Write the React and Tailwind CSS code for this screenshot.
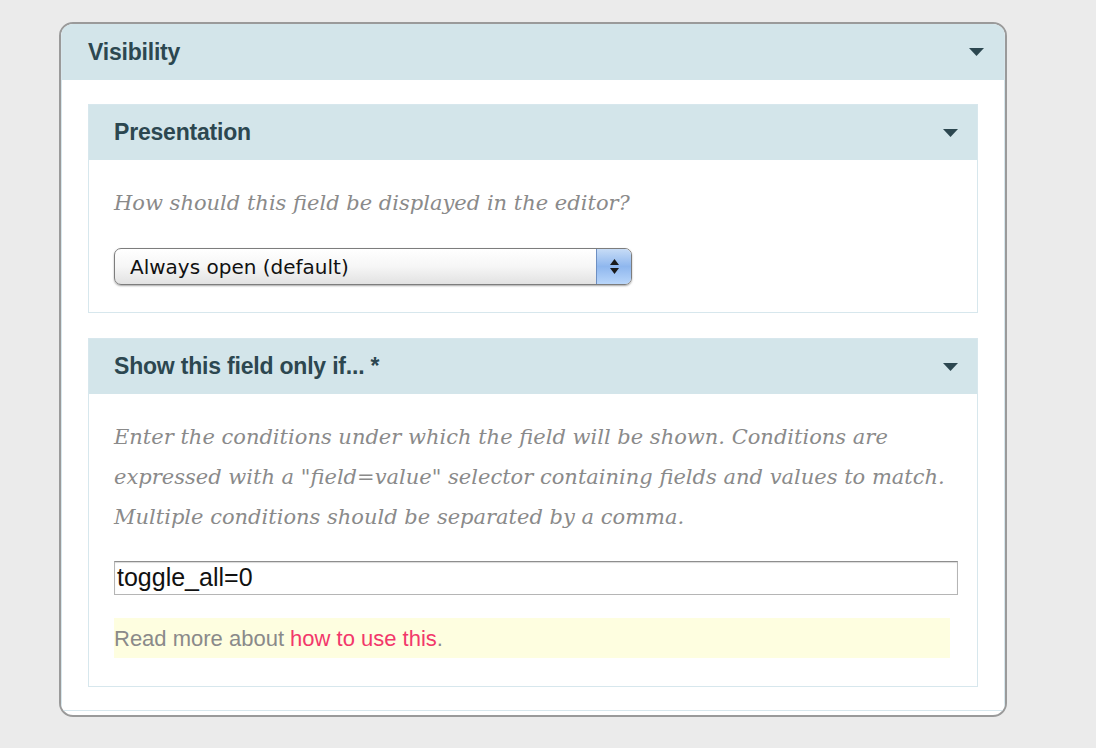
import React from "react";

function Caret({ className = "" }) {
  return (
    <svg width="15" height="8" viewBox="0 0 15 8" className={className}>
      <path d="M0 0 H15 L7.5 8 Z" fill="#2c4750" />
    </svg>
  );
}

function PanelHeader({ title }) {
  return (
    <div className="h-[55px] bg-[#d3e5ea] flex items-center justify-between pl-[25px] pr-[19px]">
      <span className="text-[23px] font-bold text-[#2c4750] tracking-[-0.2px]" style={{ fontFamily: '"Liberation Sans", Arial, sans-serif' }}>
        {title}
      </span>
      <Caret />
    </div>
  );
}

export default function App() {
  const serif = { fontFamily: '"DejaVu Serif", Georgia, serif' };
  const sans = { fontFamily: '"Liberation Sans", Arial, sans-serif' };
  return (
    <div className="w-[1096px] h-[748px] bg-[#ebebeb] pt-[22px] pl-[59px]">
      <div className="w-[948px] h-[695px] border-2 border-[#9a9a9a] rounded-[14px] bg-white overflow-hidden">
        <div className="border-x border-b border-[#d7e7ed] h-[687px] flex flex-col">
          <div className="h-[56px] bg-[#d3e5ea] flex items-center justify-between pl-[26px] pr-[20px]">
            <span className="text-[23px] font-bold text-[#2c4750] tracking-[-0.2px]" style={sans}>
              Visibility
            </span>
            <Caret />
          </div>
          <div className="pt-[24px] px-[26px] flex flex-col gap-[25px]">
            <div className="border border-[#d7e7ed] h-[209px]">
              <PanelHeader title="Presentation" />
              <div className="px-[25px] pt-[28px]">
                <p className="text-[21px] italic text-[#8a8a8a] leading-[30px] whitespace-nowrap" style={serif}>
                  How should this field be displayed in the editor?
                </p>
                <div className="mt-[30px] w-[518px] h-[37px] rounded-[7px] border border-[#7d7d7d] shadow-[0_1px_2px_rgba(0,0,0,0.35)] bg-gradient-to-b from-white via-[#f6f6f6] to-[#e2e2e2] flex items-stretch overflow-hidden">
                  <div className="flex-1 flex items-center pl-[15px] text-[20px] text-[#111]" style={{ fontFamily: '"DejaVu Sans", Verdana, sans-serif' }}>
                    Always open (default)
                  </div>
                  <div className="w-[35px] border-l border-[#6d8fc2] bg-gradient-to-b from-[#c7dcf6] via-[#8fb7ee] to-[#b9d6fa] flex flex-col items-center justify-center gap-[3px]">
                    <svg width="9" height="6" viewBox="0 0 9 6"><path d="M4.5 0 L9 6 H0 Z" fill="#1a1a1a" /></svg>
                    <svg width="9" height="6" viewBox="0 0 9 6"><path d="M0 0 H9 L4.5 6 Z" fill="#1a1a1a" /></svg>
                  </div>
                </div>
              </div>
            </div>
            <div className="border border-[#d7e7ed] h-[349px]">
              <PanelHeader title="Show this field only if... *" />
              <div className="px-[25px] pt-[23px]">
                <p className="text-[21px] italic text-[#8a8a8a] leading-[40px] whitespace-nowrap" style={serif}>
                  Enter the conditions under which the field will be shown. Conditions are
                  <br />
                  expressed with a "field=value" selector containing fields and values to match.
                  <br />
                  Multiple conditions should be separated by a comma.
                </p>
                <div className="mt-[24px] w-[844px] h-[34px] border border-[#b5b5b5] border-t-[#8e8e8e] shadow-[inset_0_1px_1px_rgba(0,0,0,0.15)] bg-white flex items-center pl-[2px] text-[25px] text-[#111]" style={sans}>
                  toggle_all=0
                </div>
                <div className="mt-[23px] w-[836px] h-[40px] bg-[#fefee0] flex items-center text-[22px] text-[#8a8a8a]" style={sans}>
                  <span>Read more about&nbsp;</span>
                  <span className="text-[#f2386b]">how to use this</span>
                  <span>.</span>
                </div>
              </div>
            </div>
          </div>
        </div>
      </div>
    </div>
  );
}
